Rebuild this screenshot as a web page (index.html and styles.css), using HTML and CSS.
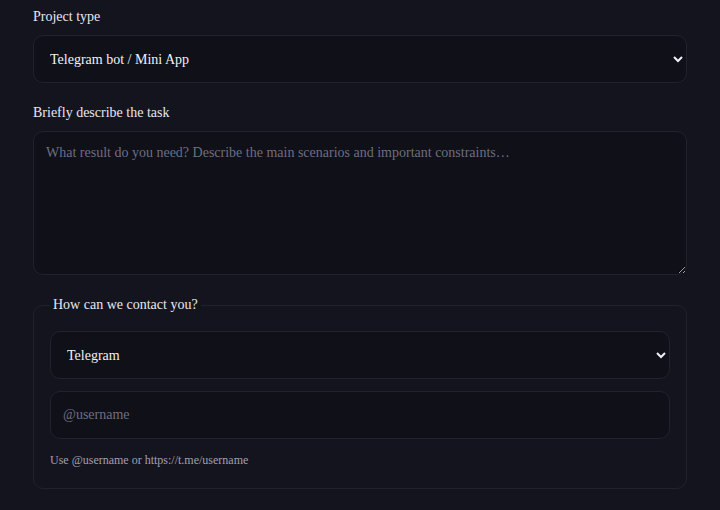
FILE: index.html
```html
<!DOCTYPE html>
<html lang="en">
<head>
<meta charset="utf-8">
<link rel="stylesheet" href="styles.css">
</head>
<body>
<form class="form">
  <div class="field">
    <label class="label" for="ptype">Project type</label>
    <select id="ptype" class="control select">
      <option>Telegram bot / Mini App</option>
    </select>
  </div>
  <div class="field">
    <label class="label" for="task">Briefly describe the task</label>
    <textarea id="task" class="control textarea" placeholder="What result do you need? Describe the main scenarios and important constraints…"></textarea>
  </div>
  <fieldset class="contact">
    <legend class="legend">How can we contact you?</legend>
    <select class="control select">
      <option>Telegram</option>
    </select>
    <input class="control input" type="text" placeholder="@username">
    <p class="hint">Use @username or https://t.me/username</p>
  </fieldset>
</form>
</body>
</html>
```
FILE: styles.css
```css
html { color-scheme: dark; }
body {
  margin: 0;
  background: #14141f;
  color: #e8e8f0;
  font-family: "Liberation Serif", serif;
}
.form {
  padding: 8px 33px 22px;
  display: flex;
  flex-direction: column;
}
.field {
  display: flex;
  flex-direction: column;
  margin-bottom: 21px;
}
.field + .field {
  margin-bottom: 14px;
}
.label {
  font-size: 14px;
  line-height: 17px;
  margin-bottom: 10px;
}
.control {
  box-sizing: border-box;
  width: 100%;
  background: #101019;
  border: 1px solid #22222e;
  border-radius: 10px;
  color: #f0f0f6;
  font-family: "Liberation Serif", serif;
  font-size: 14px;
  outline: none;
}
.select {
  height: 48px;
  padding: 0 12px;
}
.textarea {
  height: 144px;
  padding: 13px 12px;
  resize: vertical;
  display: block;
}
.textarea::placeholder, .input::placeholder {
  color: #6e6e80;
}
.contact {
  margin: 8px 0 0;
  border: 1px solid #22222e;
  border-radius: 10px;
  padding: 18px 16px 20px;
  display: flex;
  flex-direction: column;
  gap: 12px;
}
.legend {
  font-size: 14px;
  padding: 0 3px;
}
.input {
  height: 48px;
  padding: 0 12px;
}
.hint {
  margin: 2px 0 0;
  font-size: 12px;
  color: #a0a0b0;
}
```
